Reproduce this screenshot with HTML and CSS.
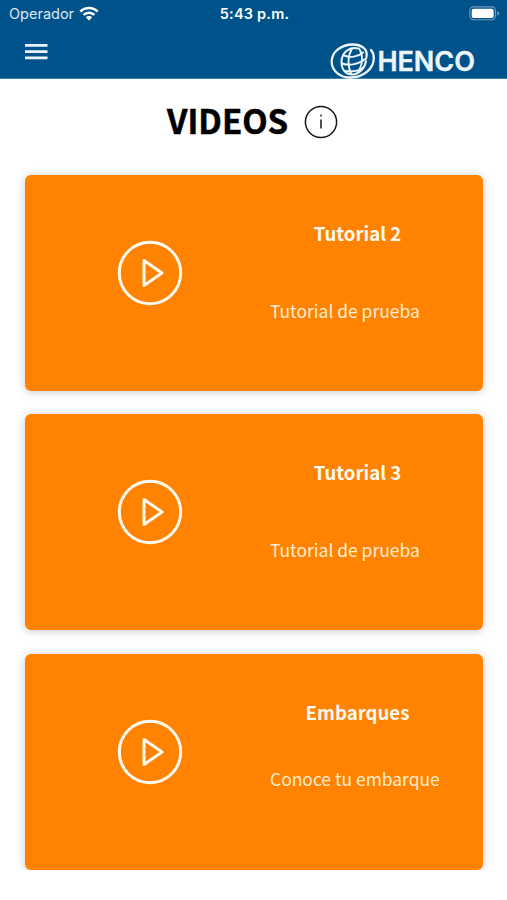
FILE: index.html
```html
<!DOCTYPE html>
<html lang="es">
<head>
<meta charset="utf-8">
<title>Videos</title>
<link rel="stylesheet" href="styles.css">
</head>
<body>
<svg width="0" height="0" class="defs">
  <symbol id="play" viewBox="0 0 66 66">
    <circle cx="33" cy="33" r="30.7" fill="none" stroke="currentColor" stroke-width="3"/>
    <path d="M27 20.5v25L45 33z" fill="none" stroke="currentColor" stroke-width="3" stroke-linejoin="round"/>
  </symbol>
</svg>
<header class="header">
  <div class="status">
    <div class="carrier"><span>Operador</span>
      <svg class="wifi" viewBox="0 0 20 15"><g fill="none" stroke="#fff" stroke-width="2.6"><path d="M1.4 5.5a12.3 12.3 0 0 1 17.2 0"/><path d="M4.6 8.9a7.7 7.7 0 0 1 10.8 0"/></g><path d="M6.8 11.2a4.6 4.6 0 0 1 6.4 0L10 14.5z" fill="#fff"/></svg>
    </div>
    <time class="time">5:43 p.m.</time>
    <svg class="battery" viewBox="0 0 31 15"><rect x=".9" y=".9" width="25.6" height="12.8" rx="3.6" fill="none" stroke="#6c9cc0" stroke-width="1.1"/><rect x="2.7" y="2.7" width="22" height="9.2" rx="2" fill="#fff"/><path d="M28.2 4.9q2 .8 2 2.4t-2 2.4z" fill="#6c9cc0"/></svg>
  </div>
  <div class="nav">
    <svg class="menu" viewBox="0 0 24 17"><path d="M1 2.300h22.500M1 8.700h22.500M1 14.900h22.500" stroke="#eaf3fa" stroke-width="2.700"/></svg>
    <div class="brand">
      <svg class="globe" viewBox="0 0 46 36" fill="none" stroke="#eef5fa" stroke-linecap="round">
        <path d="M36.500 13.500C38 6 31 1.500 23 1.500 11 1.500 1.700 9 1.700 18.500 1.700 28 10 34.500 20.500 34.500 33 34.500 43.800 26 43.800 15 43.800 11.500 42.800 9 41 7" stroke-width="2.300"/>
        <path d="M28 5.500C19 3 11.500 10 11.500 19 11.500 27 16 31.500 22.500 31.500 29 31.500 35 25 36 18" stroke-width="2"/>
        <path d="M22 5.500C17.500 13 17.500 23 21 30.500M29 5.500C33.500 12 33 23 27 30" stroke-width="1.900"/>
        <path d="M14 12.500C20 15 28 14 33 9.500M12 20.500C19 23 29 21.500 36.500 15M15 28C21 29 28 28 33 25" stroke-width="1.900"/>
      </svg>
      <span class="wordmark">HENCO</span>
    </div>
  </div>
</header>
<main class="content">
  <div class="heading">
    <h1>VIDEOS</h1>
    <svg class="info" viewBox="0 0 34 34"><circle cx="17" cy="17" r="15.600" fill="none" stroke="#151515" stroke-width="1.500"/><path d="M17 14.500v9" stroke="#222" stroke-width="1.600"/><circle cx="17" cy="10.400" r="1" fill="#333"/></svg>
  </div>
  <section class="cards">
    <article class="card"><svg class="play"><use href="#play"/></svg><div class="text"><h2>Tutorial 2</h2><p>Tutorial de prueba</p></div></article>
    <article class="card"><svg class="play"><use href="#play"/></svg><div class="text"><h2>Tutorial 3</h2><p>Tutorial de prueba</p></div></article>
    <article class="card near"><svg class="play"><use href="#play"/></svg><div class="text"><h2>Embarques</h2><p>Conoce tu embarque</p></div></article>
  </section>
</main>
</body>
</html>
```
FILE: styles.css
```css
* { box-sizing: border-box; }
body { margin: 0; background: #fff; font-family: "Noto Sans CJK JP", "Noto Sans", sans-serif; }
h1, h2, p { margin: 0; white-space: nowrap; }
svg { display: block; flex: none; }
.defs { position: absolute; }
.header { height: 79px; background: #00528a; border-bottom: 1px solid #3f86b8; color: #fff; }
.status { height: 28px; display: grid; grid-template-columns: 1fr auto 1fr; align-items: center; padding: 0 7px 0 9px; font: 14.5px/28px Inter, sans-serif; }
.carrier { display: flex; align-items: center; gap: 5px; color: #dbe8f2; }
.wifi { width: 20px; height: 15px; margin-top: -2px; }
.time { font-weight: 600; letter-spacing: .2px; }
.battery { width: 31px; height: 15px; justify-self: end; margin-top: -2px; }
.nav { height: 50px; display: flex; justify-content: space-between; align-items: flex-start; padding: 0 32px 0 24px; }
.menu { width: 24px; height: 17px; margin-top: 15px; }
.brand { display: flex; align-items: center; gap: 1px; margin-top: 14px; color: #eef5fa; }
.globe { width: 46px; height: 36px; }
.wordmark { font: 600 27px/36px Inter, sans-serif; -webkit-text-stroke: .4px currentColor; padding-top: 2px; }
.heading { display: flex; align-items: center; height: 86px; padding-left: 167px; gap: 16px; }
h1 { font-size: 33px; line-height: 44px; font-weight: 700; color: #000; margin-top: -4px; -webkit-text-stroke: .5px #000; }
.info { width: 34px; height: 34px; }
.cards { display: flex; flex-direction: column; gap: 23.400px; padding: 10px 24.500px 0 25px; }
.card { height: 216px; border-radius: 6px; background: #ff8300; box-shadow: 0 1px 8px rgba(0, 0, 0, .22); display: flex; padding-left: 92px; color: #fffaf0; }
.play { width: 66px; height: 66px; margin-top: 65px; }
.text { margin-left: 87px; width: 175px; padding-top: 43px; }
h2 { font-size: 18.600px; line-height: 30px; font-weight: 700; text-align: center; }
p { font-size: 17.450px; line-height: 28px; margin-top: 49px; color: #ffecd0; }
.near p { margin-top: 38px; }
```
